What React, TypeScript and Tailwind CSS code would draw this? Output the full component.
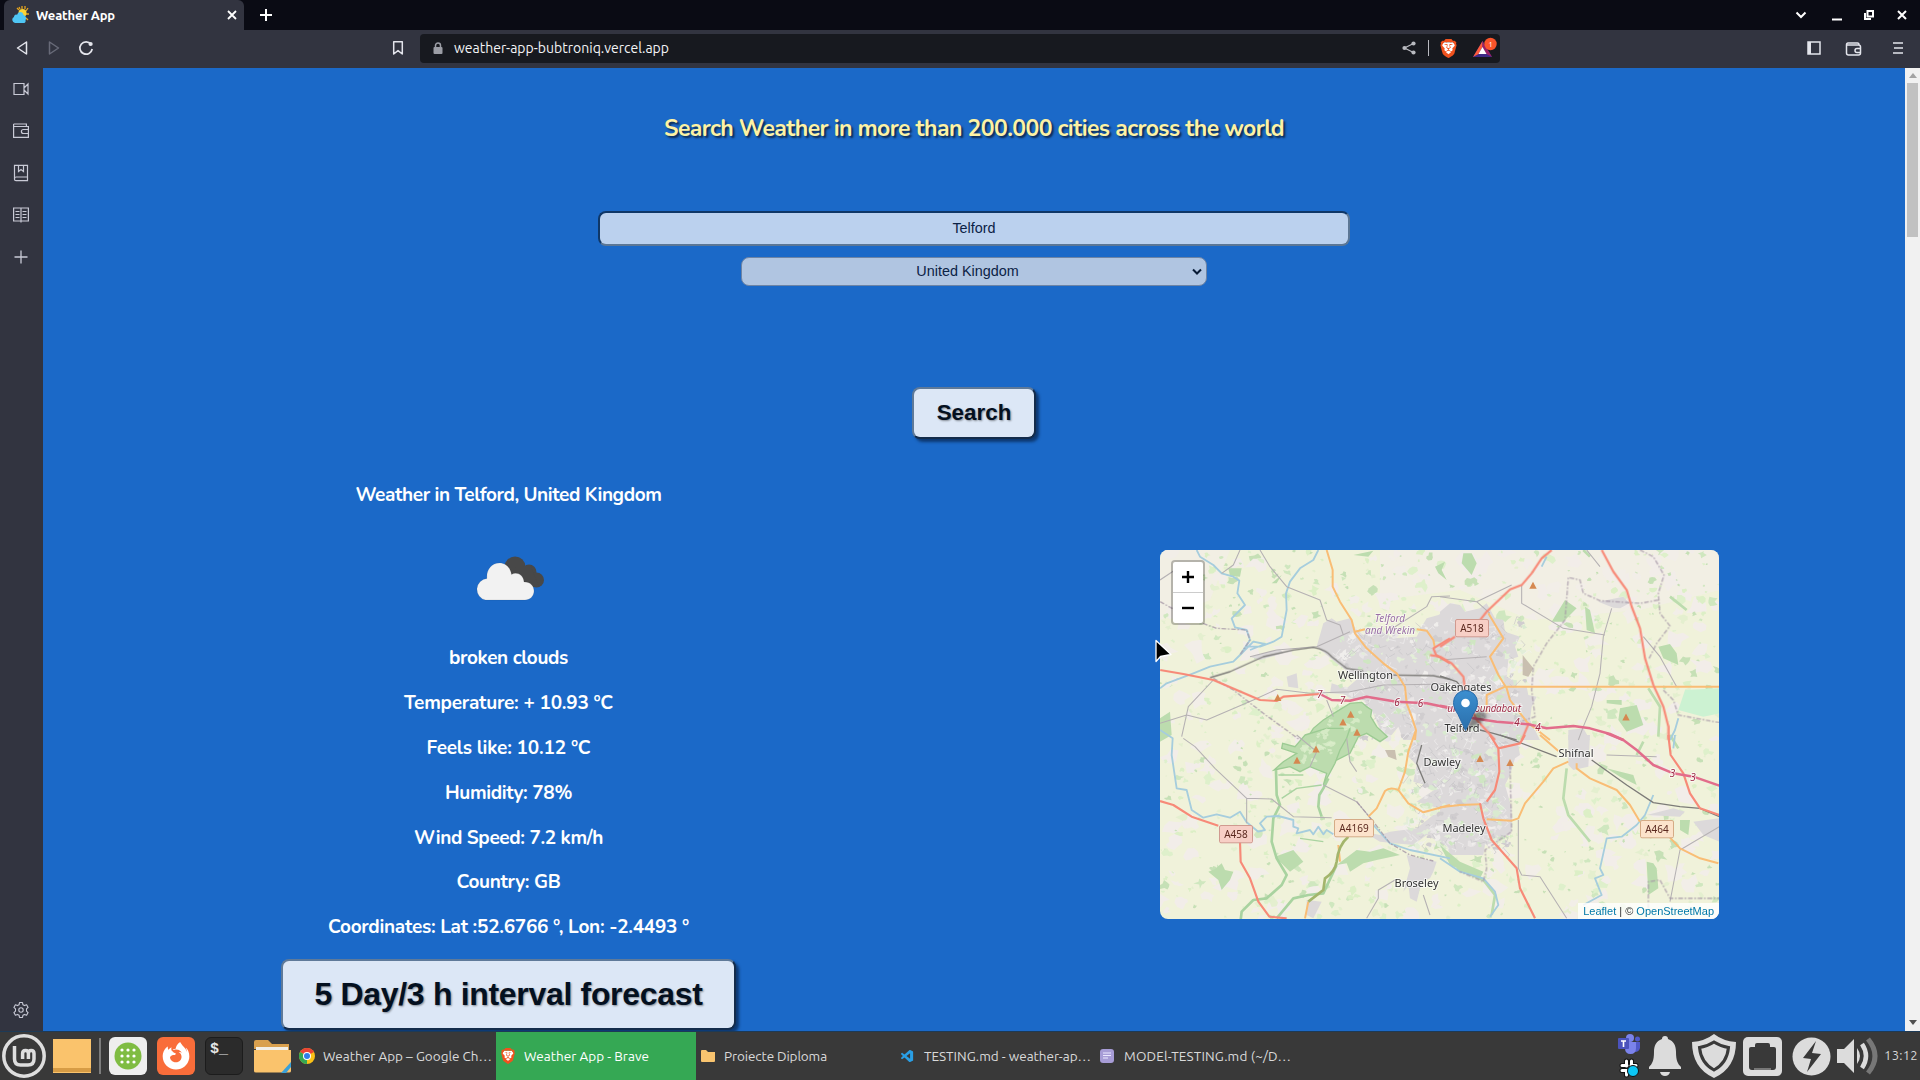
import { useLayoutEffect, useRef, useState } from "react";
import type { ReactNode } from "react";
import { SiBrave } from "react-icons/si";
import { VscVscode } from "react-icons/vsc";
import { FaFirefoxBrowser } from "react-icons/fa";

/* Text that spreads its letters to fill a given width. */
function Fit({ w, children, className = "" }: { w: number; children: string; className?: string }) {
  const ref = useRef<HTMLSpanElement>(null);
  const [spacing, setSpacing] = useState(0);
  useLayoutEffect(() => {
    if (ref.current) setSpacing((w - ref.current.getBoundingClientRect().width) / children.length);
  }, []);
  return (
    <span ref={ref} className={"inline-block whitespace-pre " + className} style={{ letterSpacing: spacing }}>
      {children}
    </span>
  );
}

function Svg({ w, h, className = "", children }: { w: number; h: number; className?: string; children: ReactNode }) {
  return (
    <svg width={w} height={h} viewBox={`0 0 ${w} ${h}`} fill="none" className={"block shrink-0 " + className}>
      {children}
    </svg>
  );
}

function Brave({ size }: { size: number }) {
  return (
    <svg width={size} height={size} viewBox="0 0 24 24" className="block shrink-0">
      <path d="M6 4h12l3 4-3 9-6 5-6-5-3-9z" fill="#fff" />
      <SiBrave size={24} color="#f0521e" />
    </svg>
  );
}

function TabBar() {
  return (
    <div className="flex h-[30px] bg-[#0a0b14] pl-1">
      <div className="flex h-[30px] w-60 items-center rounded-t-md bg-[#323440] pl-2">
        <Svg w={18} h={18}>
          <g stroke="#e9a61c" strokeWidth="1.3">
            <path d="M10 0v3M5 2l2 2M16 2l-2 3M14 8h3M14 12l2 2M7 1l1 2M13 0v3" />
          </g>
          <circle cx="10.5" cy="7" r="4" fill="#fbd434" />
          <path d="M3 17a3.2 3.2 0 0 1-1-6c0-2 2-3 3-2 1-4 6-4 6.500 0 3 1 3 4 2 5 .5 2-.5 3-2 3z" fill="#4fc6f4" />
        </Svg>
        <Fit w={79} className="mt-px ml-1.5 text-[13px] font-semibold text-white">Weather App</Fit>
        <Svg w={10} h={10} className="ml-[112px]">
          <path d="M1 1l8 8M9 1l-8 8" stroke="#fff" strokeWidth="1.8" />
        </Svg>
      </div>
      <Svg w={14} h={14} className="mt-2 ml-[15px]">
        <path d="M7 1v12M1 7h12" stroke="#fff" strokeWidth="2" />
      </Svg>
      <div className="ml-auto flex items-center pr-[13px]">
        <Svg w={12} h={12} className="mr-6"><path d="M1.500 3.500l4.500 4.500 4.500-4.500" stroke="#fff" strokeWidth="2" /></Svg>
        <Svg w={12} h={12} className="mr-5"><path d="M1 10.500h10" stroke="#fff" strokeWidth="2" /></Svg>
        <Svg w={12} h={12} className="mr-[22px]"><path d="M4.500 2h5.500v5.500h-5.500zM2 4v6h6" stroke="#fff" strokeWidth="2" /></Svg>
        <Svg w={10} h={10}><path d="M1 1l8 8M9 1l-8 8" stroke="#fff" strokeWidth="2" /></Svg>
      </div>
    </div>
  );
}

function Toolbar() {
  return (
    <div className="flex h-[38px] items-center bg-[#323440] pb-0.5 text-[#e4e5ec]">
      <Svg w={12} h={16} className="ml-4"><path d="M10.500 2v12L1.500 8z" stroke="currentColor" strokeWidth="1.5" strokeLinejoin="round" /></Svg>
      <Svg w={12} h={16} className="ml-5"><path d="M1.500 2v12L10.500 8z" stroke="#686a78" strokeWidth="1.5" strokeLinejoin="round" /></Svg>
      <Svg w={16} h={16} className="ml-[18px]">
        <path d="M13 4.200A6.200 6.200 0 1 0 14.200 9" stroke="currentColor" strokeWidth="1.7" />
        <circle cx="12.600" cy="4" r="2.100" fill="currentColor" />
      </Svg>
      <Svg w={12} h={16} className="ml-[298px]"><path d="M1.700 1.700h8.600v12.300L6 10.600 1.700 14z" stroke="currentColor" strokeWidth="1.5" strokeLinejoin="round" /></Svg>
      <div className="ml-4 flex h-[29px] w-[1080px] items-center rounded bg-[#17191f]">
        <Svg w={10} h={13} className="ml-[13px]">
          <rect x="0.500" y="5" width="9" height="7" rx="1" fill="#9b9da5" />
          <path d="M2.500 5.500V3.500a2.500 2.500 0 0 1 5 0v2" stroke="#9b9da5" strokeWidth="1.500" />
        </Svg>
        <Fit w={215} className="ml-[11px] text-[14px] text-[#f4f4f6]">weather-app-bubtroniq.vercel.app</Fit>
        <Svg w={14} h={14} className="ml-auto">
          <path d="M11.500 2.500L2.500 7l9 4.500" stroke="#b9bac0" strokeWidth="1.300" />
          <circle cx="11.500" cy="2.500" r="2.100" fill="#b9bac0" /><circle cx="2.500" cy="7" r="2.100" fill="#b9bac0" /><circle cx="11.500" cy="11.500" r="2.100" fill="#b9bac0" />
        </Svg>
        <div className="ml-3 h-4 w-px bg-[#b9bac0]" />
        <div className="ml-[10px]"><Brave size={19} /></div>
        <Svg w={26} h={22} className="mr-0.5 ml-3.5">
          <path d="M10.500 4L1 20h19z" fill="#3c2a86" />
          <path d="M10.500 4L1 20l5.500-3 4-7z" fill="#ff5a3c" />
          <path d="M10.500 4L20 20l-5.500-3-4-7z" fill="#9a1f63" />
          <path d="M10.500 10l4 7h-8z" fill="#fff" />
          <circle cx="18.500" cy="7" r="6.200" fill="#fb542b" />
          <text x="18.500" y="9.800" textAnchor="middle" fontSize="8" fill="#fff">1</text>
        </Svg>
      </div>
      <div className="ml-auto flex items-center pr-4">
        <Svg w={14} h={14}><path d="M1 1h12v12H1z" stroke="currentColor" strokeWidth="1.500" /><path d="M1 1h3v12H1z" fill="currentColor" /></Svg>
        <Svg w={18} h={16} className="mt-0.5 ml-[24px]">
          <path d="M1.500 3.500v8.500q0 2 2 2h10q2 0 2-2V6q0-2-2-2h-12q0-2 1.500-2h9.500q1.500 0 1.500 2M16 7.500h-4a2 2 0 0 0 0 4h4" stroke="currentColor" strokeWidth="1.500" />
        </Svg>
        <Svg w={12} h={14} className="ml-[29px]"><path d="M1 2h10M2 7h9M1 12h10" stroke="currentColor" strokeWidth="1.700" /></Svg>
      </div>
    </div>
  );
}

function SideBar() {
  return (
    <div className="flex w-[43px] flex-col items-center bg-[#323440] pt-3 pr-0.5 text-[#c9cad6]">
      <Svg w={18} h={18}><path d="M2 3.500h10v11H2zM12 8l4-4v10l-4-4" stroke="currentColor" strokeWidth="1.200" /></Svg>
      <Svg w={18} h={18} className="mt-6"><path d="M1.600 2h12.800v2.500M1.600 2v13.400h14.800V4.500H1.600M16.400 7.500h-5q-2 0-2 2t2 2h5" stroke="currentColor" strokeWidth="1.200" /></Svg>
      <Svg w={18} h={18} className="mt-6"><path d="M2.500 1.300h13v15.400H4q-1.500 0-1.500-1.500zM2.500 15q0-2 1.500-2h11.500M6.500 1.500v6l2.500-2 2.500 2v-6" stroke="currentColor" strokeWidth="1.200" /></Svg>
      <Svg w={18} h={18} className="mt-6"><path d="M1.600 2h14.800v13H1.600zM9 2v14.500M3.500 5.500h4M3.500 8.500h4M3.500 11.500h4M10.500 5.500h4M10.500 8.500h4M10.500 11.500h4" stroke="currentColor" strokeWidth="1.200" /></Svg>
      <Svg w={18} h={18} className="mt-6"><path d="M9 2.500v13M2.500 9h13" stroke="currentColor" strokeWidth="1.300" /></Svg>
      <Svg w={18} h={18} className="mt-auto mb-3">
        <path d="M7.500 1.500h3l.4 2.200 1.600.9 2.100-.8 1.500 2.600-1.600 1.500v2.200l1.600 1.500-1.500 2.600-2.100-.8-1.600.9-.4 2.200h-3l-.4-2.200-1.600-.9-2.100.8-1.500-2.600 1.600-1.500V7.900L1.900 6.400l1.500-2.600 2.100.8 1.600-.9z" stroke="currentColor" strokeWidth="1.100" strokeLinejoin="round" />
        <circle cx="9" cy="9" r="2.200" stroke="currentColor" strokeWidth="1.100" />
      </Svg>
    </div>
  );
}

/* Deterministic scatter of fields, woods and streets for the map background. */
function makeRandom(seed: number) {
  let s = seed;
  return () => {
    s = (s * 16807) % 2147483647;
    return s / 2147483647;
  };
}
const rnd = makeRandom(4711);
function blob(cx: number, cy: number, r: number) {
  const a0 = rnd() * 6;
  return Array.from({ length: 9 }, (_, k) => {
    const a = a0 + (k * Math.PI * 2) / 9;
    const q = r * (0.3 + rnd() * 0.9);
    return `${(cx + Math.cos(a) * q * 1.2).toFixed(1)},${(cy + Math.sin(a) * q).toFixed(1)}`;
  }).join(" ");
}
const PATCH = ["#f2eee8", "#f2ede9", "#dcefc6", "#def0cb", "#c6e0b6", "#cfe7bf", "#e4efcf"];
const patches = Array.from({ length: 1300 }, (_, i) => {
  const c = i % PATCH.length;
  const r = c < 2 ? 3 + rnd() * 8 : 1 + rnd() * rnd() * 6;
  return { pts: blob(1160 + rnd() * 559, 550 + rnd() * 369, r), fill: PATCH[c] };
});
const TOWN = ["#e9e6e6", "#cfe6c2", "#e3eed8", "#d0cdcf", "#f0eeec", "#d9ead0"];
const townPatches = Array.from({ length: 420 }, (_, i) => {
  const y = 622 + rnd() * 228;
  const spread = y < 740 ? 95 : 52;
  const mid = y < 740 ? 1432 : 1456;
  return { pts: blob(mid + (rnd() * 2 - 1) * spread, y, 1 + rnd() * 3.5), fill: TOWN[i % TOWN.length] };
});
const streets = Array.from({ length: 380 }, (_, i) => {
  const y = 622 + rnd() * 228;
  const spread = y < 740 ? 92 : 48;
  const mid = y < 740 ? 1432 : 1456;
  const x = mid + (rnd() * 2 - 1) * spread;
  const dx = (rnd() - 0.5) * 16;
  const dy = (rnd() - 0.5) * 16;
  return { d: `M${x.toFixed(1)} ${y.toFixed(1)}l${dx.toFixed(1)} ${dy.toFixed(1)}l${(-dy / 2).toFixed(1)} ${(dx / 2).toFixed(1)}`, light: i % 2 === 0 };
});
/* Small clearings along the wooded ridge */
const clearings = Array.from({ length: 26 }, () => {
  const t = rnd();
  return blob(1298 + t * 62 + (rnd() - 0.5) * 18, 760 - t * 42 + (rnd() - 0.5) * 26, 1 + rnd() * 4);
});

const NW = "translate(1150 540) scale(.33333)";
const NE = "translate(1440 540) scale(.33333)";
const SW = "translate(1150 735) scale(.33333)";
const SE = "translate(1440 735) scale(.33333)";

type Layer = { nw: string; ne: string; sw: string; se: string };
function Lines({ d, color, width, dash, opacity = 1 }: { d: Layer; color: string; width: number; dash?: string; opacity?: number }) {
  return (
    <g stroke={color} strokeWidth={width} strokeDasharray={dash} opacity={opacity} strokeLinejoin="round">
      <path transform={NW} d={d.nw} />
      <path transform={NE} d={d.ne} />
      <path transform={SW} d={d.sw} />
      <path transform={SE} d={d.se} />
    </g>
  );
}

const rivers: Layer = {
  nw: "M140 30L150 50L190 75L215 100L250 110L268 122L262 160L285 195L245 235L255 262L290 270L300 300L270 345L250 365L180 380L130 400L90 415L50 430L30 445M505 30L490 60L450 85L420 125L408 160L410 210L395 290L370 305L330 320L290 320M270 345L310 305L345 312L300 330",
  ne: "M690 600L705 570L715 535M320 50L305 80",
  sw: "M30 -15L68 10L65 60L80 160L110 165L125 225L160 248L200 238L240 248L270 230L290 262L325 290L345 285L330 265L350 245L385 243L430 255L430 275L445 280L440 295L480 285L490 298L505 275L520 298L530 285L550 298M670 270L720 325L780 345L900 370",
  se: "M0 370L60 410L130 430L165 470L175 510L150 545M640 180L615 240L590 270L545 305L500 310L480 400L490 420L465 430L485 480L430 510M705 0L700 40",
};
const minor: Layer = {
  nw: "M330 30L360 80L410 140L510 180L530 240L570 255L580 285M30 120L75 90M270 30L250 75L215 100M30 550L110 525L170 540L310 480L380 448L480 460L600 455L700 435L900 432M190 420L115 500L95 590M720 270L830 200L845 170L900 168M300 350L380 330L500 320L600 275M530 480L550 530",
  ne: "M0 170L110 185L215 135M110 185L150 220M245 135L245 190L370 265L495 285M515 205L490 290L480 400L455 500L430 560L415 600M610 290L660 350L710 440M440 30L480 80M0 360L140 350",
  sw: "M100 10L135 35L195 100L290 190L365 192L430 245L545 248M290 190L290 265M520 150L620 200L670 260M735 435L685 465L685 490L650 550M590 10L600 80L620 110M820 480L840 540M440 0L500 50L480 95",
  se: "M235 255L235 400L245 420L300 425L380 550M838 275L720 345L690 500M500 60L650 65",
};
const border: Layer = {
  nw: "M30 185L130 240L200 265L290 270L300 300L270 345M190 415L250 450L340 520L450 600",
  ne: "M600 30L640 50L672 105L655 160L660 220L690 258L650 310L625 360M655 180L600 190L480 182L430 160L420 120L385 112L375 240L320 310L280 380L275 450L285 530L240 545M670 450L700 480L715 525L838 548",
  sw: "M620 200L670 260L720 325L780 360L850 378",
  se: "M210 90L215 290L135 345L140 400L130 440L60 410M625 520L625 440L660 435L690 490L838 490",
};
const orange: Layer = {
  nw: "M530 30L548 90L548 140L570 185L605 240L615 280L650 325L700 370L740 400L765 440L770 490L785 530L798 570L795 600M800 268L830 272L850 300L855 325M615 275L645 268",
  ne: "M838 440L195 440L140 465L140 520M145 220L190 295L150 350L175 405L200 445L210 480L260 545L330 600",
  sw: "M798 -15L775 50L765 110L745 165Q720 155 705 168L680 220L655 245M745 165L775 205L820 232L900 210M475 500L465 550M570 380L565 330",
  se: "M0 217L60 210L120 208M300 0L355 48M385 80L340 100L310 140L255 205L235 250L215 257L140 253M410 85L410 100L450 130L530 165L570 210L600 260M690 308L720 340L780 370L835 385",
};
const red: Layer = {
  nw: "M30 390L100 402L190 420L330 480L380 483L400 470L510 462M900 295L850 325L858 345L900 370",
  ne: "M335 30L305 55L275 100L245 135L210 148L140 215L120 240M45 290L0 320M-30 345L0 350L35 370L70 410L78 470L110 540L165 600M485 30L520 95L560 150L575 200L600 265L615 355L640 435L670 500L685 560L685 600M265 553L245 600",
  sw: "M30 198L70 210L125 245L205 272M270 320L272 380L300 430L325 500L358 545L410 550",
  se: "M150 0L175 40L178 110L165 165L140 200M120 205L130 250L155 315L230 400L240 460L285 550M685 0L692 60L730 115L750 175L780 220L838 240M255 0L240 25L175 40",
};
const motorway: Layer = {
  nw: "M510 462L545 480L600 482L650 470L740 485L830 490L900 505",
  ne: "M0 497L40 505L100 535L170 545L265 553L320 565L400 558L450 565L510 582L550 600",
  sw: "",
  se: "M500 -5L550 15L590 45L640 90L700 115L760 125L838 152",
};
const rail: Layer = {
  nw: "M180 413L240 395L340 350L430 330L490 322Q530 330 545 350L590 385L640 393M730 405L850 407L900 418",
  ne: "M0 408L50 425L80 460M120 570L160 580L230 600",
  sw: "M815 30L800 85L825 145",
  se: "M180 0L350 65M455 75L560 150L640 203L720 215L780 220L838 245",
};

const peaks = [
  [1277.700, 698], [1350.700, 714.700], [1343, 722.500], [1357, 732.700], [1533, 585.700], [1626, 717.500],
  [1316, 749.500], [1297, 760.700], [1480, 759], [1510, 763],
];

function Place({ x, y, w, children }: { x: number; y: number; w: number; children: string }) {
  return (
    <text x={x} y={y} textAnchor="middle" textLength={w} fontSize="11" fill="#333" stroke="#fff" strokeOpacity=".6" strokeWidth="2" paintOrder="stroke">
      {children}
    </text>
  );
}

function Shield({ x, y, w, trunk, children }: { x: number; y: number; w: number; trunk?: boolean; children: string }) {
  return (
    <g>
      <rect x={x} y={y} width={w} height="17.300" rx="1.500" fill={trunk ? "#f7cfc6" : "#fce3cb"} stroke={trunk ? "#d09a90" : "#d5ab86"} />
      <text x={x + w / 2} y={y + 12.300} textAnchor="middle" fontSize="10" fill="#5c2a20">{children}</text>
    </g>
  );
}

function MapDrawing() {
  return (
    <svg width="559" height="369" viewBox="1160 550 559 369" fill="none" className="block" fontFamily="Noto Sans, sans-serif">
      <rect x="1160" y="550" width="559" height="369" fill="#f0f2da" />
      <path d="M1160 550h70l-20 50-50 20zM1380 550h340v40l-80 20-110 10-70-30-80 10z" fill="#f2eee8" opacity=".7" />
      {patches.map((p, i) => <polygon key={i} points={p.pts} fill={p.fill} />)}
      <g fill="#dcd9da">
        <path transform={NW} d="M520 250L545 235L560 245L600 235L615 265L640 285L690 270L730 295L800 290L815 260L830 235L865 225L900 205V600H760L745 560L725 585L700 590L665 510L640 480L600 475L580 462L540 460L545 430L590 445L630 410L600 400L560 370L530 345L500 320Z" />
        <path transform={NW} d="M300 350L390 328L400 340L330 360ZM410 410L440 400L445 445L415 440Z" />
        <path transform={NE} d="M0 215L30 190L60 195L75 215L120 205L140 190L165 235L190 240L195 275L240 290L225 320L235 350L205 360L200 410L230 425L230 445L260 440L265 465L290 470L275 500L270 540L300 600H0ZM475 185L550 170L568 190L540 205L520 203ZM385 570L430 565L450 600H385Z" />
        <path transform={SW} d="M800 0H900V340L830 300L790 330L690 320L640 290L690 300L720 290L800 280L850 240L900 230L800 200L860 160L790 140L800 90L770 60Z" />
        <path transform={SW} d="M770 360L860 380L850 410L840 430L815 440L800 500L780 490L775 450L760 470L780 400ZM470 495L515 500L490 550L470 540Z" />
        <path transform={SE} d="M0 0H250L235 30L240 60L225 70L210 120L195 150L215 220V290L170 320L135 330L130 360H30L20 330L0 320ZM385 0H450L445 95L400 105L385 90ZM620 240L700 220L735 230L720 245ZM760 260L838 250V320L790 300Z" />
      </g>
      {townPatches.map((p, i) => <polygon key={i} points={p.pts} fill={p.fill} />)}
      {streets.map((s, i) => <path key={i} d={s.d} stroke={s.light ? "#f3f1f1" : "#c6c4c7"} strokeWidth={0.7} opacity={0.9} />)}
      <g fill="#bcdcae" stroke="#9ccb93" strokeWidth="4">
        <path transform={NW} d="M465 605L490 565L520 540L560 515L600 490L635 487L650 500L665 510L662 530L680 560L712 590L690 605L650 580L625 590L600 640L560 660L480 660Z" />
        <path transform={SW} d="M465 0L530 -20L600 -20L590 10L570 45L555 85L520 150L530 115L480 95L450 110L420 95L372 105L400 80L440 55L395 40L398 25L435 35Z" />
      </g>
      {clearings.map((c, i) => <polygon key={i} points={c} fill="#dbeeca" opacity=".8" />)}
      <g fill="#bcdcae">
        <path transform={NE} d="M335 245L375 180L410 205L370 245ZM500 480H545V495L500 490ZM540 505L590 495L610 555L560 575L535 540ZM655 320L690 312L710 340L715 375L670 355ZM70 40L95 40L110 70L95 105L65 70ZM435 200L450 210L465 280L440 270Z" />
        <path transform={SW} d="M175 410L195 402L215 385L225 405L250 410L240 435L215 465L205 435ZM375 365L430 345L460 380L420 410ZM560 390L600 360L620 345L660 350L700 340L750 360L680 375L640 385L600 410L590 385ZM30 -50L60 -70L65 0L30 20Z" />
        <path transform={SE} d="M620 380L640 385L650 400L655 460L625 480ZM720 255L750 255L745 300L720 285ZM500 100L580 120L590 150L540 125ZM0 330L60 380L130 410L120 430L30 390Z" />
        <path transform={NW} d="M235 85L275 85L270 110L240 108ZM365 130L395 105L380 130ZM855 80L885 65L875 90L890 120L865 100ZM610 45L670 32L655 50Z" />
      </g>
      <path transform={NE} d="M735 450L838 445V520L790 530L715 510Z" fill="#ccf2d2" />
      <g fill="#c9bfb0"><path transform={NE} d="M248 345L280 385L265 410L248 405Z" /><path transform={SW} d="M705 45L735 45L740 75L715 65Z" /></g>
      <g transform={SW} stroke="#a9d3a0" strokeWidth="8" strokeLinejoin="round">
        <path d="M378 105L380 180L390 210L370 250L365 320L380 370L410 420L395 450L350 490L310 495L275 530L272 555M535 130L520 160L508 180L505 215L515 245M380 550L430 490L475 480L520 475L560 390" />
        <path d="M395 190L440 160L515 150M385 120L460 120M450 310L520 320" strokeWidth="4" />
      </g>
      <path transform={SE} d="M50 400L130 435L165 480L155 540M380 100L370 190L385 240L450 320M590 60L610 20M690 0L715 40" stroke="#bcdcae" strokeWidth="8" />
      <path transform={NE} d="M430 30L450 50M625 445L660 500L655 590M690 170L740 210" stroke="#bcdcae" strokeWidth="8" />
      <Lines d={rivers} color="#a6cddd" width={5.5} />
      <Lines d={minor} color="#b5b1b3" width={3.2} />
      <Lines d={border} color="#a597a6" width={4} dash="14 5 5 5" opacity={0.8} />
      <Lines d={rail} color="#7c7b78" width={4} />
      <Lines d={orange} color="#f9bd75" width={6} />
      <path transform={SW} d="M595 305Q565 330 560 380Q555 410 525 430L520 465L475 500" stroke="#a3b56c" strokeWidth="8" />
      <Lines d={red} color="#f78a78" width={6.5} />
      <Lines d={motorway} color="#e26d8b" width={7.5} />
      {peaks.map(([x, y], i) => <path key={i} d={`M${x} ${y - 4}l3.700 7h-7.400z`} fill="#d58850" />)}
      <g fill="#9a6fa5" fontSize="10" fontStyle="italic" textAnchor="middle" stroke="#fff" strokeOpacity=".6" strokeWidth="1.500" paintOrder="stroke">
        <text x="1390" y="622">Telford</text>
        <text x="1390" y="633.500" textLength="50">and Wrekin</text>
      </g>
      <Place x={1365.500} y={679} w={55}>Wellington</Place>
      <Place x={1461} y={690.500} w={61}>Oakengates</Place>
      <Place x={1462} y={731.500} w={35}>Telford</Place>
      <Place x={1442} y={766} w={37}>Dawley</Place>
      <Place x={1464} y={832} w={43}>Madeley</Place>
      <Place x={1416.500} y={887} w={44}>Broseley</Place>
      <Place x={1576} y={757} w={35}>Shifnal</Place>
      <g fill="#9c2a45" fontSize="10" fontStyle="italic" textAnchor="middle" stroke="#fff" strokeOpacity=".7" strokeWidth="2" paintOrder="stroke">
        <text x="1319.700" y="698">7</text><text x="1342.500" y="704">7</text>
        <text x="1397" y="706">6</text><text x="1420.500" y="706.500">6</text>
        <text x="1517" y="726">4</text><text x="1538" y="730.500">4</text>
        <text x="1672.500" y="777">3</text><text x="1693" y="780.500">3</text>
        <text x="1453" y="712">un</text>
        <text x="1521" y="712" textAnchor="end" textLength="52">Roundabout</text>
      </g>
      <Shield x={1455.500} y={619.500} w={33} trunk>A518</Shield>
      <Shield x={1219.500} y={825.500} w={33} trunk>A458</Shield>
      <Shield x={1334.500} y={819.500} w={39}>A4169</Shield>
      <Shield x={1640.500} y={820.500} w={33}>A464</Shield>
      <defs>
        <linearGradient id="pin" x1="0" y1="0" x2="0" y2="1"><stop offset="0" stopColor="#3d8fd0" /><stop offset="1" stopColor="#2a6fab" /></linearGradient>
        <filter id="soft"><feGaussianBlur stdDeviation="1.500" /></filter>
      </defs>
      <path d="M1466 730l7-16q8-5 12-1t-4 10z" fill="#000" opacity=".4" filter="url(#soft)" />
      <path d="M1465.500 690.500a12 12 0 0 1 12 12c0 5-2 8-4.500 12l-7.500 16-7.500-16c-2.500-4-4.500-7-4.500-12a12 12 0 0 1 12-12z" fill="url(#pin)" stroke="#2a6cab" />
      <circle cx="1465.500" cy="703" r="4.300" fill="#fff" />
    </svg>
  );
}

function LeafletMap() {
  return (
    <div className="relative mt-[111px] h-[369px] w-[559px] overflow-hidden rounded-lg">
      <MapDrawing />
      <div className="absolute top-2.5 left-[11px] w-[34px] rounded border-2 border-black/25 bg-white bg-clip-padding text-black">
        <div className="flex h-[31px] items-center justify-center border-b border-[#ccc]">
          <Svg w={12} h={12}><path d="M6 0v12M0 6h12" stroke="#000" strokeWidth="2.400" /></Svg>
        </div>
        <div className="flex h-[30px] items-center justify-center">
          <Svg w={12} h={12}><path d="M0 6h12" stroke="#000" strokeWidth="2.400" /></Svg>
        </div>
      </div>
      <div className="absolute right-0 bottom-0 h-4 bg-white/80 px-[5px] font-['Liberation_Sans',sans-serif] text-[11px] leading-4 text-[#333]">
        <span className="text-[#0078a8]">Leaflet</span> | © <span className="text-[#0078a8]">OpenStreetMap</span>
      </div>
    </div>
  );
}

const readings: { text: string; w: number; gap: string }[] = [
  { text: "broken clouds", w: 119, gap: "mt-[15px]" },
  { text: "Temperature: + 10.93 °C", w: 209, gap: "mt-[17px]" },
  { text: "Feels like: 10.12 °C", w: 164, gap: "mt-[17px]" },
  { text: "Humidity: 78%", w: 127, gap: "mt-[17px]" },
  { text: "Wind Speed: 7.2 km/h", w: 189, gap: "mt-[17px]" },
  { text: "Country: GB", w: 104, gap: "mt-[16px]" },
  { text: "Coordinates: Lat :52.6766 °, Lon: -2.4493 °", w: 361, gap: "mt-[17px]" },
];

function Page() {
  return (
    <main className="flex grow flex-col items-center overflow-hidden bg-[#1b69c8] font-['Nunito','Lato',sans-serif]">
      <h1 className="mt-[45px] h-8 text-[23px] leading-8 font-bold text-[#fdf2a4] [text-shadow:2px_2px_2px_rgba(10,25,50,0.8)]">
        <Fit w={620}>Search Weather in more than 200.000 cities across the world</Fit>
      </h1>
      <div className="mt-[66px] flex h-[35px] w-[752px] items-center justify-center rounded-lg border-2 border-t-[#0f3767] border-r-[#5c7795] border-b-[#5c7795] border-l-[#0f3767] bg-[#bbd1ee] pt-px font-['Liberation_Sans',sans-serif] text-[14.4px] text-[#0b2245]">
        Telford
      </div>
      <div className="mt-[11px] flex h-[29px] w-[466px] items-center rounded-lg border border-[#6d84a5] bg-[#b0c5e1] pr-1 font-['Liberation_Sans',sans-serif] text-[14.4px] text-[#0b2245]">
        <span className="grow pt-px pl-px text-center">United Kingdom</span>
        <Svg w={10} h={8}><path d="M1 1.500l4 4 4-4" stroke="#071a35" strokeWidth="2" /></Svg>
      </div>
      <div className="mt-[101px] flex h-[52px] w-[124px] shrink-0 items-center justify-center rounded-lg border-2 border-t-[#5f7a99] border-r-[#142c4b] border-b-[#142c4b] border-l-[#5f7a99] bg-[#dce7f6] font-['Liberation_Sans',sans-serif] text-[22.4px] font-bold text-[#04101f] shadow-[3px_3px_3px_rgba(5,25,55,0.6)] [text-shadow:1px_1px_2px_rgba(0,0,0,0.4)]">
        Search
      </div>
      <div className="grid w-full grid-cols-2 justify-items-center">
        <section className="flex flex-col items-center text-[19px] leading-7 font-bold text-white">
          <h2 className="mt-[42px] h-7"><Fit w={306}>Weather in Telford, United Kingdom</Fit></h2>
          <Svg w={100} h={100} className="mt-5">
            <g fill="#484848"><circle cx="56" cy="38" r="10.500" /><circle cx="70" cy="43" r="7.500" /><circle cx="77.500" cy="51" r="7.500" /><path d="M56 38L72 38 80 58H60z" /></g>
            <path d="M26.500 71a10.900 10.900 0 0 1 1.500-21.500C27 41 32.500 34 40.500 34c6 0 11 4.500 12 11.500 5-3 12 0 12.500 7.500 6-.5 10 4 10 9s-4 9-9 9z" fill="#f2f2f2" stroke="#1d1d1d" strokeOpacity=".2" strokeWidth=".5" />
          </Svg>
          {readings.map((r) => (
            <p key={r.text} className={"h-7 " + r.gap}><Fit w={r.w}>{r.text}</Fit></p>
          ))}
          <div className="mt-[18px] flex h-[71px] w-[455px] items-center justify-center rounded-lg border-2 border-t-[#5f7a99] border-r-[#142c4b] border-b-[#142c4b] border-l-[#5f7a99] bg-[#dce7f6] pb-px font-['Liberation_Sans',sans-serif] text-[32px] text-[#04101f] shadow-[3px_3px_3px_rgba(5,25,55,0.6)] [text-shadow:1px_1px_2px_rgba(0,0,0,0.4)]">
            <Fit w={388}>5 Day/3 h interval forecast</Fit>
          </div>
        </section>
        <LeafletMap />
      </div>
    </main>
  );
}

function ScrollBar() {
  return (
    <div className="flex w-[15px] shrink-0 flex-col items-center bg-[#f1f1f1]">
      <Svg w={8} h={5} className="mt-[5px]"><path d="M4 0l4 5H0z" fill="#a3a3a3" /></Svg>
      <div className="mt-[5px] h-[154px] w-[11px] bg-[#c1c1c1]" />
      <Svg w={8} h={5} className="mt-auto mb-1.5"><path d="M4 5l4-5H0z" fill="#505050" /></Svg>
    </div>
  );
}

function Task({ icon, label, w, active }: { icon: ReactNode; label: string; w: number; active?: boolean }) {
  return (
    <div className={"flex h-12 items-center pl-1 text-[13.500px] text-[#dadada] " + (active ? "w-[200px] bg-[#35a854] text-white" : "w-[202px]")}>
      <div className="flex w-5 shrink-0">{icon}</div>
      <Fit w={w} className="ml-1">{label}</Fit>
    </div>
  );
}

function TaskBar() {
  return (
    <div className="flex h-[49px] items-center border-t border-[#1d3a56] bg-[#393939]">
      <Svg w={44} h={44} className="ml-0.5">
        <circle cx="22" cy="22" r="20.200" stroke="#dedede" strokeWidth="3.500" />
        <path d="M12.500 12v13q0 6 6 6h7.500q6 0 6-6v-5.500q0-3-2.800-3t-2.800 3V25M26.400 24v-4.500q0-3-2.900-3t-2.900 3V25" stroke="#dedede" strokeWidth="3.500" />
      </Svg>
      <Svg w={38} h={34} className="ml-[7px]"><path d="M0 0h38v34H0z" fill="#fac36c" /><path d="M0 29h38v4H0z" fill="#d79c45" /></Svg>
      <div className="ml-2 h-9 w-0.5 bg-[#7d7d7d]" />
      <Svg w={38} h={38} className="ml-2">
        <rect width="38" height="38" rx="6" fill="#eeeeee" /><circle cx="19" cy="19" r="13.500" fill="#7fbc42" />
        {[13, 19, 25].map((y) => [13, 19, 25].map((x) => <circle key={`${x}-${y}`} cx={x} cy={y} r="1.600" fill="#fff" />))}
      </Svg>
      <div className="ml-[10px] flex size-[38px] items-center justify-center rounded-md bg-[#f96d3a]"><FaFirefoxBrowser size={28} color="#fff" /></div>
      <div className="ml-[10px] h-[38px] w-[38px] rounded-md border border-[#1c1c1c] bg-[#2b2b2b] pt-1 pl-1 font-['Liberation_Mono',monospace] text-[15px] leading-4 font-bold text-[#e6e6e6]">$_</div>
      <Svg w={38} h={34} className="ml-[10px]">
        <path d="M1 10V3q0-2 2-2h12l4 4h17v6z" fill="#d9a04e" /><path d="M3 8h32v6H3z" fill="#f2efe8" /><path d="M1 11h37v21q0 1.500-2 1.500H3q-2 0-2-1.500z" fill="#fac36c" /><path d="M28 34l10-11v5l-5 6z" fill="#3aa0d8" />
      </Svg>
      <div className="ml-1 flex">
        <div className="w-[201px]">
          <Task
            w={169}
            label="Weather App – Google Ch…"
            icon={
              <Svg w={16} h={16}>
                <circle cx="8" cy="8" r="8" fill="#fbc116" /><path d="M8 8L1.070 4a8 8 0 0 1 13.860 0z" fill="#ea4335" /><path d="M8 8L1.070 4a8 8 0 0 0 6.930 12z" fill="#34a853" />
                <circle cx="8" cy="8" r="4" fill="#fff" /><circle cx="8" cy="8" r="3" fill="#2f7de9" />
              </Svg>
            }
          />
        </div>
        <Task active w={125} label="Weather App - Brave" icon={<Brave size={16} />} />
        <Task
          w={103}
          label="Proiecte Diploma"
          icon={<Svg w={16} h={14}><path d="M1 2q0-1 1-1h4l2 2h7v9q0 1-1 1H2q-1 0-1-1z" fill="#f9c46f" /></Svg>}
        />
        <div className="-ml-0.5"><Task w={167} label="TESTING.md - weather-ap…" icon={<VscVscode size={15} color="#2a9fe5" />} /></div>
        <div className="-ml-0.5">
          <Task
            w={167}
            label="MODEl-TESTING.md (~/D…"
            icon={<Svg w={15} h={15}><rect width="14" height="14" rx="3" fill="#a79cd6" /><path d="M3 4h8M3 6.500h8M3 9h5" stroke="#ece8ff" strokeWidth="1.100" /></Svg>}
          />
        </div>
      </div>
      <div className="ml-auto flex items-center">
        <div className="flex flex-col gap-1">
          <Svg w={23} h={20}>
            <circle cx="12" cy="4" r="4" fill="#7b83eb" /><circle cx="19.500" cy="5" r="2.500" fill="#5059c9" /><path d="M15 8h7v6q-1 4-5 4z" fill="#5059c9" /><path d="M7 8h11v6q0 6-5.500 6T7 14z" fill="#7b83eb" /><rect y="4" width="11" height="11" rx="1" fill="#4b53bc" />
            <path d="M3 7h5M5.500 7v6" stroke="#fff" strokeWidth="1.600" />
          </Svg>
          <Svg w={23} h={20}>
            <g stroke="#111" strokeWidth="5" strokeLinecap="round"><path d="M8.500 3v5M13.500 3v4M4 7.500h5M13 7.500h5M4 12.500h5M8.500 13v4" /></g>
            <g stroke="#fff" strokeWidth="3" strokeLinecap="round"><path d="M8.500 3v5M13.500 3v4M4 7.500h5M13 7.500h5M4 12.500h5M8.500 13v4" /></g>
            <circle cx="15" cy="13" r="5.500" fill="#0cc6f5" stroke="#111" />
          </Svg>
        </div>
        <Svg w={34} h={42} className="ml-[7px]"><path d="M17 1q3 0 3 3c6 2 8 7 8 13 0 9 2 12 5 15v2H1v-2c3-3 5-6 5-15 0-6 2-11 8-13q0-3 3-3zM12 37h10q-1 4-5 4t-5-4z" fill="#dcdcdc" /></Svg>
        <Svg w={44} h={44} className="ml-2.5">
          <path d="M22 0q9 7 22 8 0 26-22 36Q0 34 0 8 13 7 22 0z" fill="#dcdcdc" />
          <path d="M22 8q7 4.500 14.500 5.500Q35 29 22 36 9 29 7.500 13.500 15 12.500 22 8z" fill="#dcdcdc" stroke="#393939" strokeWidth="3" />
        </Svg>
        <Svg w={39} h={39} className="ml-[7px]"><rect width="39" height="39" rx="5" fill="#dcdcdc" /><path d="M6 12q0-2 2-2h4V8q0-2 2-2h11q2 0 2 2v2h4q2 0 2 2v18q0 3-3 3H9q-3 0-3-3z" fill="#393939" /><path d="M11 32h17" stroke="#777" strokeWidth="2" /></Svg>
        <Svg w={39} h={39} className="ml-2.5"><circle cx="19.500" cy="19.500" r="19" fill="#dcdcdc" /><path d="M24 4L11 21l8 1-4 13 14-18-9-1z" fill="#393939" /></Svg>
        <Svg w={42} h={40} className="ml-[6px]">
          <path d="M0 13h7L17 3v34L7 27H0z" fill="#dcdcdc" /><path d="M20 12q6 8 0 16z" fill="#dcdcdc" /><path d="M25 8q8 12 0 24" stroke="#dcdcdc" strokeWidth="4.500" /><path d="M31 3q14 17 0 34" stroke="#777" strokeWidth="5" />
        </Svg>
        <Fit w={34} className="mr-0.5 ml-[5px] text-[13px] text-[#dadada]">13:12</Fit>
      </div>
    </div>
  );
}

export default function App() {
  return (
    <div className="relative flex h-[1080px] w-[1920px] flex-col overflow-hidden font-['Ubuntu','Noto_Sans',sans-serif]">
      <TabBar />
      <Toolbar />
      <div className="flex h-[963px] overflow-hidden">
        <SideBar />
        <Page />
        <ScrollBar />
      </div>
      <TaskBar />
      <Svg w={18} h={24} className="absolute top-[639px] left-[1155px]">
        <path d="M1 1.500v21l4.500-5L16 15.500z" fill="#000" stroke="#fff" strokeWidth="1.300" strokeLinejoin="round" />
      </Svg>
    </div>
  );
}
